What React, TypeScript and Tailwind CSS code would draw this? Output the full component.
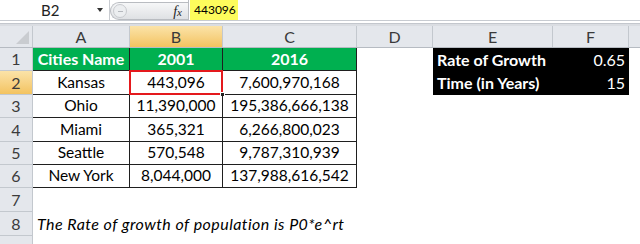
import React from 'react';

const cols = [
  { key: 'A', w: 'w-[97px]' },
  { key: 'B', w: 'w-[93px]' },
  { key: 'C', w: 'w-[134px]' },
  { key: 'D', w: 'w-[76px]' },
  { key: 'E', w: 'w-[120px]' },
  { key: 'F', w: 'w-[76px]' },
];

const data = [
  ['Kansas', '443,096', '7,600,970,168'],
  ['Ohio', '11,390,000', '195,386,666,138'],
  ['Miami', '365,321', '6,266,800,023'],
  ['Seattle', '570,548', '9,787,310,939'],
  ['New York', '8,044,000', '137,988,616,542'],
];

const heights = ['h-[23px]', 'h-[24px]', 'h-[23px]', 'h-[24px]', 'h-[23px]', 'h-[23px]', 'h-[24px]', 'h-[24px]'];

function RowHead({ n, active }: { n: number; active?: boolean }) {
  return (
    <div
      className={
        'w-[33px] shrink-0 flex items-center justify-center border-r border-b border-[#c3c8ce] text-[16px] text-[#3b3b3b] ' +
        (active ? 'bg-gradient-to-b from-[#fbe3a8] to-[#f3c35f]' : 'bg-[#e4e7ec]')
      }
    >
      {n}
    </div>
  );
}

function FormulaBar() {
  return (
    <div className="h-[21px] flex bg-white border-b border-[#c7cbd1]">
      <div className="w-[109px] flex items-center relative">
        <span className="ml-[41px] text-[15px] text-[#222]">B2</span>
        <span className="ml-auto mr-[6px] w-0 h-0 border-l-[3px] border-r-[3px] border-t-[4px] border-l-transparent border-r-transparent border-t-[#333]" />
      </div>
      <div className="w-px bg-[#c9ccd1]" />
      <div className="w-[78px] mt-[2px] h-[18px] flex items-center rounded-l-full border border-r-0 border-[#b9bcc1] bg-gradient-to-b from-[#f6f7f8] to-[#dfe1e4]">
        <div className="ml-[2px] w-[14px] h-[14px] rounded-full border border-[#c8cace] bg-[#eceef0] flex items-center justify-center">
          <div className="w-[5px] h-px bg-[#b5b8bd]" />
        </div>
        <span className="ml-auto mr-[6px] text-[14px] italic font-['Liberation_Serif',serif] text-[#222]">
          f<span className="text-[11px]">x</span>
        </span>
      </div>
      <div className="w-px bg-[#b9bcc1]" />
      <div className="w-[48px] ml-px bg-[#fdfc5c] flex items-center pl-[4px] text-[12px] text-black">443096</div>
      <div className="flex-1" />
    </div>
  );
}

const cell = 'shrink-0 border-r border-b border-[#1f1f1f] flex items-center justify-center text-[15.5px] text-black';

export default function App() {
  return (
    <div className="w-[640px] h-[244px] overflow-hidden bg-white font-['Lato',sans-serif]">
      <FormulaBar />
      <div className="h-[2px] bg-white" />
      <div className="h-[3px] bg-[#dadde2] border-t border-[#c3c7cd]" />

      {/* column headers */}
      <div className="flex h-[22px] border-b border-[#b6bbc2]">
        <div className="w-[33px] shrink-0 bg-[#e4e7ec] border-r border-[#c3c8ce] relative overflow-hidden">
          <div className="absolute right-[3px] bottom-[3px] w-0 h-0 border-l-[13px] border-l-transparent border-b-[13px] border-b-[#c9ccd0]" />
        </div>
        {cols.map((c) => (
          <div
            key={c.key}
            className={
              c.w +
              ' shrink-0 flex items-center justify-center border-r border-[#c3c8ce] text-[16px] text-[#3a3a3a] ' +
              (c.key === 'B' ? 'bg-gradient-to-b from-[#fbe3a8] to-[#f3c35f]' : 'bg-[#e4e7ec]')
            }
          >
            {c.key}
          </div>
        ))}
        <div className="flex-1 bg-[#e4e7ec]" />
      </div>

      {/* row 1 */}
      <div className={'flex ' + heights[0]}>
        <RowHead n={1} />
        <div className="w-[97px] shrink-0 bg-[#00b050] border-r border-b border-[#1f1f1f] flex items-center justify-center text-white font-bold text-[16px]">
          Cities Name
        </div>
        <div className="w-[93px] shrink-0 bg-[#00b050] border-r border-b border-[#1f1f1f] flex items-center justify-center text-white font-bold text-[16px]">
          2001
        </div>
        <div className="w-[134px] shrink-0 bg-[#00b050] border-r border-b border-[#1f1f1f] flex items-center justify-center text-white font-bold text-[16px]">
          2016
        </div>
        <div className="w-[76px] shrink-0" />
        <div className="w-[120px] shrink-0 bg-black text-white font-bold text-[16px] flex items-center pl-[4px]">Rate of Growth</div>
        <div className="w-[76px] shrink-0 bg-black text-white text-[16px] flex items-center justify-end pr-[4px]">0.65</div>
      </div>

      {data.map((r, i) => (
        <div key={i} className={'flex ' + heights[i + 1]}>
          <RowHead n={i + 2} active={i === 0} />
          <div className={'w-[97px] ' + cell}>{r[0]}</div>
          <div className={'w-[93px] relative ' + cell}>
            {r[1]}
            {i === 0 && (
              <>
                <div className="absolute -left-px -top-px -right-px -bottom-px border-[2px] border-[#e4191d]" />
                <div className="absolute -right-[3px] -bottom-[3px] w-[5px] h-[5px] bg-[#222] border border-white" />
              </>
            )}
          </div>
          <div className={'w-[134px] ' + cell}>{r[2]}</div>
          <div className="w-[76px] shrink-0" />
          {i === 0 && (
            <>
              <div className="w-[120px] shrink-0 bg-black text-white font-bold text-[16px] flex items-center pl-[4px]">Time (in Years)</div>
              <div className="w-[76px] shrink-0 bg-black text-white text-[16px] flex items-center justify-end pr-[4px]">15</div>
            </>
          )}
        </div>
      ))}

      <div className={'flex ' + heights[6]}>
        <RowHead n={7} />
      </div>
      <div className={'flex ' + heights[7]}>
        <RowHead n={8} />
        <div className="flex items-center pl-[4px] italic text-[16px] tracking-[0.45px] text-black whitespace-nowrap">
          The Rate of growth of population is P0*e^rt
        </div>
      </div>
      <div className="flex h-[10px]">
        <div className="w-[33px] shrink-0 bg-[#e4e7ec] border-r border-[#c3c8ce]" />
      </div>
    </div>
  );
}
